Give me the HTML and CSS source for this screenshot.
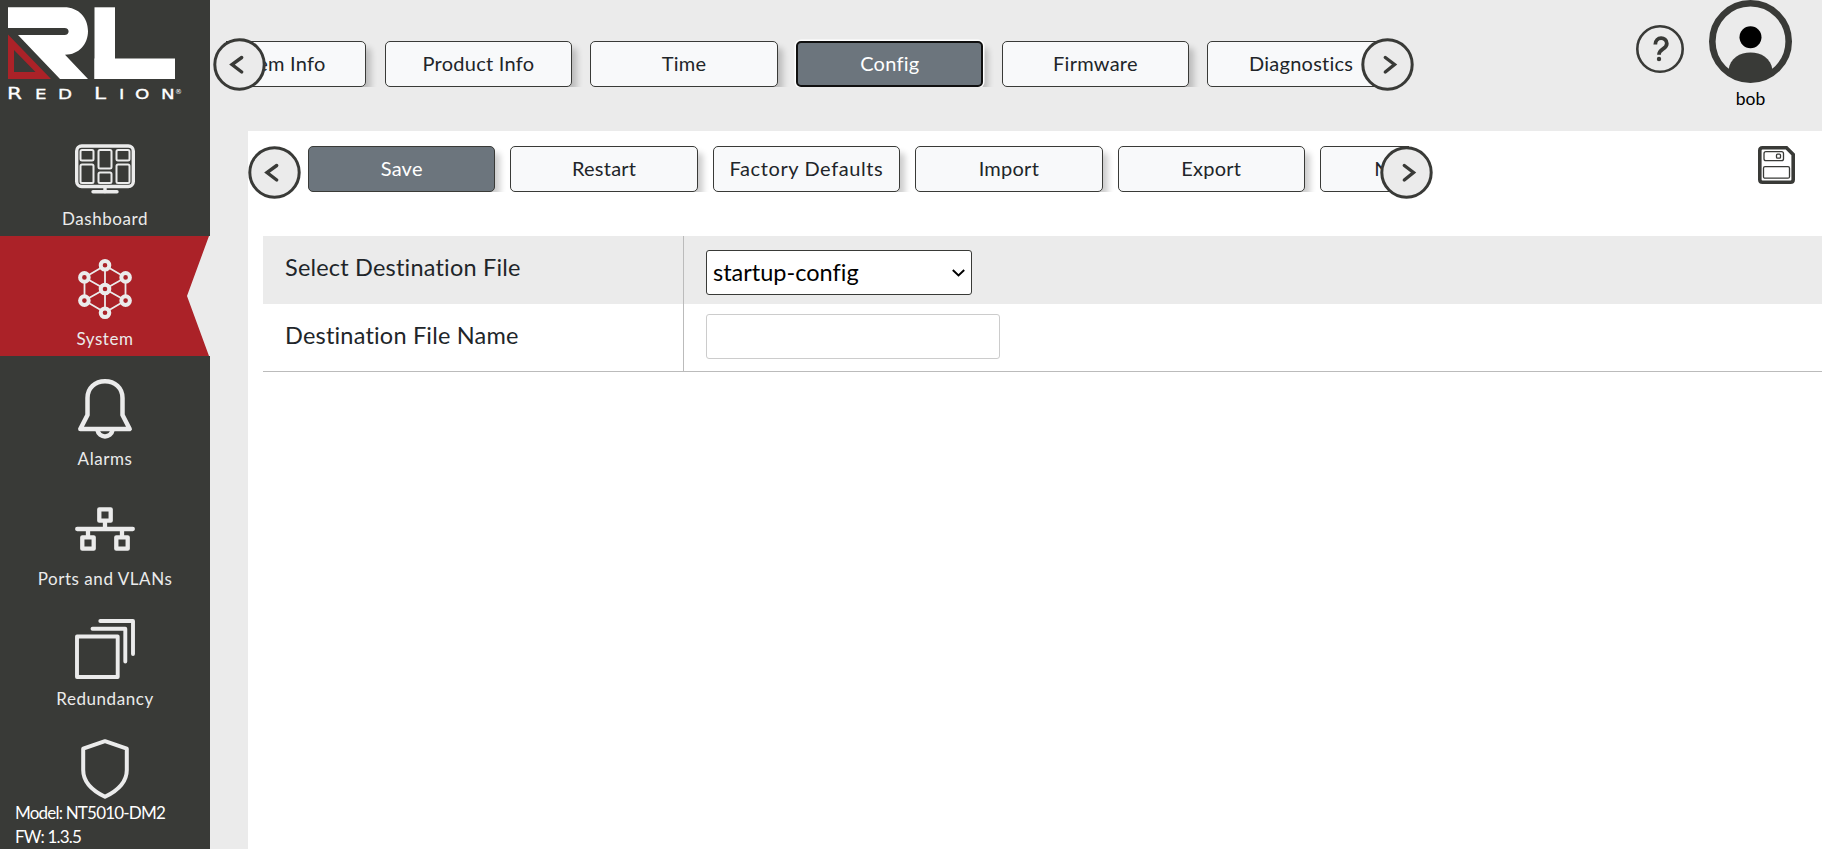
FILE: index.html
```html
<!DOCTYPE html>
<html lang="en">
<head>
  <meta charset="UTF-8">
  <title>Red Lion - System Config</title>
  <link rel="stylesheet" href="styles.css">
</head>
<body>
  <div class="sidebar">
    <div class="logo">
      <svg class="logo-mark" width="176" height="80" viewBox="0 0 176 80">
        <path fill="#fff" d="M8 7.300H64C79 7.300 88 18 88 31S79 54.700 65 54.700L88 79H60L18 35H64.500C70 35 70 28 64.500 28H8Z"/>
        <path fill="#ab2228" fill-rule="evenodd" d="M8 34.500L51 79H8ZM14 50V72H35.500Z"/>
        <rect x="94.500" y="7.300" width="20.500" height="71.700" fill="#fff"/>
        <rect x="94.500" y="58.500" width="80.500" height="20.500" fill="#fff"/>
      </svg>
      <div class="logo-name"><span class="cap r">R</span><span class="e">E</span><span class="d">D</span><span class="cap l">L</span><span class="i">I</span><span class="o">O</span><span class="n">N</span><sup>®</sup></div>
    </div>
    <div class="menu">
      <div class="item">
        <svg width="60" height="60" viewBox="0 0 60 60" fill="none" stroke="#ebebeb">
          <rect x="1.700" y="7" width="56.600" height="40.500" rx="5" stroke-width="3.400"/>
          <g stroke-width="2">
            <rect x="5.500" y="11" width="13" height="10.500" rx="1.500"/>
            <rect x="5.500" y="25.500" width="13" height="18.500" rx="1.500"/>
            <rect x="23.500" y="11" width="13" height="18.500" rx="1.500"/>
            <rect x="23.500" y="33.500" width="13" height="10.500" rx="1.500"/>
            <rect x="41.500" y="11" width="13" height="10.500" rx="1.500"/>
            <rect x="41.500" y="25.500" width="13" height="18.500" rx="1.500"/>
          </g>
          <path d="M30 48V53M18 52.700H42" stroke-width="3.400" stroke-linecap="round"/>
        </svg>
        <span>Dashboard</span>
      </div>
      <div class="item active">
        <svg width="60" height="60" viewBox="0 0 60 60" fill="none" stroke="#ebebeb">
          <path stroke-width="1.800" d="M30 6.500L50.500 18.500V41.500L30 53.500L9.500 41.500V18.500ZM30 6.500V53.500M9.500 18.500L50.500 41.500M50.500 18.500L9.500 41.500"/>
          <g fill="#ab2228" stroke-width="4">
            <circle cx="30" cy="6.300" r="4.300"/>
            <circle cx="50.600" cy="18.400" r="4.300"/>
            <circle cx="50.600" cy="41.600" r="4.300"/>
            <circle cx="30" cy="53.700" r="4.300"/>
            <circle cx="9.400" cy="41.600" r="4.300"/>
            <circle cx="9.400" cy="18.400" r="4.300"/>
            <circle cx="30" cy="30" r="4.300"/>
          </g>
        </svg>
        <span>System</span>
      </div>
      <div class="item">
        <svg width="60" height="60" viewBox="0 0 60 60" fill="none" stroke="#ebebeb" stroke-width="4.500" stroke-linejoin="round">
          <path d="M12.500 36V19C12.500 9 20 2.300 30 2.300S47.500 9 47.500 19V36L54.700 50H5.300Z"/>
          <path d="M22.500 51C24 59.500 36 59.500 37.500 51"/>
        </svg>
        <span>Alarms</span>
      </div>
      <div class="item">
        <svg width="60" height="60" viewBox="0 0 60 60" fill="none" stroke="#ebebeb" stroke-width="4.300" stroke-linejoin="round">
          <rect x="24.300" y="10.300" width="11.400" height="11.400"/>
          <rect x="7.300" y="38.300" width="11.400" height="11.400"/>
          <rect x="41.300" y="38.300" width="11.400" height="11.400"/>
          <path d="M2.200 30H57.800" stroke-linecap="round"/>
          <path d="M30 22V31M13 30V38M47 30V38"/>
        </svg>
        <span>Ports and VLANs</span>
      </div>
      <div class="item">
        <svg width="60" height="60" viewBox="0 0 60 60" fill="none" stroke="#ebebeb" stroke-width="3.900" stroke-linecap="round" stroke-linejoin="round">
          <rect x="2" y="17.500" width="40.700" height="40.500"/>
          <path d="M17.500 9.700H50.300V42.500"/>
          <path d="M25.300 2H58V35"/>
        </svg>
        <span>Redundancy</span>
      </div>
      <div class="item">
        <svg width="60" height="60" viewBox="0 0 60 60" fill="none" stroke="#ebebeb" stroke-width="4" stroke-linejoin="round">
          <path d="M30 2.200L51.800 9.700V31C51.800 43 43 51.500 30 57.800C17 51.500 8.200 43 8.200 31V9.700Z"/>
        </svg>
      </div>
    </div>
    <div class="version">
      <div>Model: NT5010-DM2</div>
      <div>FW: 1.3.5</div>
    </div>
  </div>

  <div class="main">
    <div class="header">
      <div class="tabs">
        <div class="strip">
          <button>System Info</button>
          <button>Product Info</button>
          <button>Time</button>
          <button class="selected focus">Config</button>
          <button>Firmware</button>
          <button>Diagnostics</button>
        </div>
        <svg class="arrow prev" width="53" height="53" viewBox="0 0 53 53">
          <circle cx="26.500" cy="26.500" r="24.700"/>
          <path d="M28.700 19.500L19 26.500L28.700 34"/>
        </svg>
        <svg class="arrow next" width="53" height="53" viewBox="0 0 53 53">
          <circle cx="26.500" cy="26.500" r="24.700"/>
          <path d="M24.300 19.500L33.500 26.500L24.300 34"/>
        </svg>
      </div>
      <svg class="help" width="48" height="48" viewBox="0 0 48 48" fill="none" stroke="#393a37">
        <circle cx="24" cy="24" r="22.700" stroke-width="2.600"/>
        <path d="M19.300 19.500C19.300 11 30.800 11.500 30.800 18.400C30.800 24.600 23 23 23 29.800" stroke-width="3.800"/>
        <circle cx="23" cy="34" r="2.200" fill="#393a37" stroke="none"/>
      </svg>
      <div class="user">
        <svg width="83" height="83" viewBox="0 0 83 83">
          <circle cx="41.500" cy="41.500" r="38.200" fill="none" stroke="#393a37" stroke-width="6.600"/>
          <circle cx="41.500" cy="37.200" r="11"/>
          <path fill="#393a37" d="M19.500 70C21 58 31 52.500 41.500 52.500S62 58 63.500 70L56 79H27Z"/>
        </svg>
        <span>bob</span>
      </div>
    </div>

    <div class="content">
      <div class="subheader">
        <div class="subtabs">
          <div class="strip">
            <button class="selected">Save</button>
            <button>Restart</button>
            <button class="long">Factory Defaults</button>
            <button>Import</button>
            <button>Export</button>
            <button>Network</button>
          </div>
          <svg class="arrow prev" width="53" height="53" viewBox="0 0 53 53">
            <circle cx="26.500" cy="26.500" r="24.700"/>
            <path d="M28.700 19.500L19 26.500L28.700 34"/>
          </svg>
          <svg class="arrow next" width="53" height="53" viewBox="0 0 53 53">
            <circle cx="26.500" cy="26.500" r="24.700"/>
            <path d="M24.300 19.500L33.500 26.500L24.300 34"/>
          </svg>
        </div>
        <svg class="disk" width="37" height="38" viewBox="0 0 37 38" fill="none" stroke="#393a37">
          <path d="M4.500 1.800H28.500L35.200 8.500V33.500Q35.200 36.200 32.500 36.200H4.500Q1.800 36.200 1.800 33.500V4.500Q1.800 1.800 4.500 1.800Z" stroke-width="3.600"/>
          <g stroke-width="1.300">
            <rect x="6" y="5.700" width="19.500" height="9" rx="2"/>
            <rect x="18.500" y="8.200" width="4" height="4" rx="1"/>
            <rect x="5.500" y="20.700" width="26" height="11.500" rx="1.500"/>
          </g>
        </svg>
      </div>

      <div class="form">
        <div class="row shaded">
          <label for="dest">Select Destination File</label>
          <div class="field">
            <div class="select">
              <select id="dest"><option>startup-config</option></select>
              <svg width="13" height="8" viewBox="0 0 13 8"><path d="M.8 1L6.500 6.500L12.200 1" fill="none" stroke="#000" stroke-width="1.900"/></svg>
            </div>
          </div>
        </div>
        <div class="row">
          <label for="name">Destination File Name</label>
          <div class="field"><input id="name" type="text"></div>
        </div>
      </div>
    </div>
  </div>
</body>
</html>
```

FILE: styles.css
```css
* { box-sizing: border-box; }
body {
  margin: 0;
  height: 849px;
  display: flex;
  overflow: hidden;
  background: #ebebeb;
  color: #212529;
  font-family: Lato, "Open Sans", sans-serif;
  font-variant-ligatures: none;
}
button, input, select {
  font-family: inherit;
  font-variant-ligatures: none;
}
svg { display: block; }

/* sidebar */
.sidebar {
  position: relative;
  flex: none;
  width: 210px;
  height: 849px;
  overflow: hidden;
  background: #393a37;
  color: #fff;
}
.logo { height: 116px; }
.logo-name {
  display: flex;
  align-items: baseline;
  padding-left: 7px;
  margin-top: 4px;
  height: 20px;
  line-height: 20px;
  font-family: "DejaVu Sans", sans-serif;
  font-size: 13.5px;
}
.logo-name span {
  transform: scaleX(1.35);
  transform-origin: left;
  -webkit-text-stroke: 0.3px #fff;
}
.logo-name .cap { font-size: 16px; }
.r { width: 28px; }
.e { width: 23px; }
.d { width: 36px; }
.l { width: 25px; }
.i { width: 16px; }
.o { width: 26px; }
.n { width: 14px; }
.logo-name sup {
  align-self: flex-start;
  padding-top: 4px;
  font-size: 7px;
  line-height: 8px;
}
.item {
  display: flex;
  flex-direction: column;
  align-items: center;
  height: 120px;
  padding-top: 23px;
  font-size: 17px;
  color: #ebebeb;
}
.item span {
  margin-top: 8px;
  line-height: 24px;
  letter-spacing: 0.55px;
}
.item.active {
  background: #ab2228;
  clip-path: polygon(0 0, 209px 0, 187px 50%, 209px 100%, 0 100%);
}
.menu {
  background: linear-gradient(#ebebeb, #ebebeb) right 120px / 23px 120px no-repeat;
}
.version {
  position: absolute;
  left: 0;
  bottom: 0;
  width: 210px;
  padding-left: 15px;
  font-size: 17px;
  line-height: 24px;
  letter-spacing: -0.8px;
}

/* header */
.main {
  flex: 1;
  display: flex;
  flex-direction: column;
  min-width: 0;
}
.header {
  display: flex;
  align-items: flex-start;
  height: 131px;
  padding-left: 3px;
}
.tabs {
  position: relative;
  width: 1201px;
  height: 53px;
  margin-top: 38px;
}
.strip {
  display: flex;
  overflow: hidden;
}
.tabs .strip {
  width: 1175px;
  height: 52px;
  margin: -3px 0 0 13px;
  padding-top: 6px;
  gap: 18.3px;
}
.tabs .strip button:first-child { margin-left: -47px; }
.strip button {
  flex: none;
  width: 187.4px;
  height: 46px;
  padding: 0 0 2px;
  border: 1px solid #393a37;
  border-radius: 5px;
  background: #f8f9fa;
  color: #212529;
  font-size: 20px;
  letter-spacing: 0.25px;
  box-shadow: 6px 6px 6px -1px rgba(0,0,0,0.2);
}
.strip .long { letter-spacing: 0.6px; }
.strip .selected {
  background: #6c757d;
  color: #fff;
}
.strip .focus {
  border: 2px solid #101010;
  box-shadow: 0 0 0 1.5px #fff, 6px 6px 6px -1px rgba(0,0,0,0.2);
}
.arrow {
  position: absolute;
  top: 0;
  fill: #ebebeb;
  stroke: #393a37;
  stroke-width: 3;
}
.arrow path {
  fill: none;
  stroke-width: 3.4;
  stroke-linecap: round;
}
.prev { left: 0; }
.next { right: 0; }
.help { margin: 25px 0 0 222px; }
.user {
  display: flex;
  flex-direction: column;
  align-items: center;
  margin-left: 25px;
  color: #000;
  font-size: 17.5px;
}
.user span { margin-top: 4px; line-height: 24px; }

/* page content */
.content {
  flex: 1;
  margin-left: 38px;
  background: #fff;
}
.subheader {
  display: flex;
  justify-content: space-between;
  height: 105px;
  padding: 15px 27px 0 0;
}
.subtabs {
  position: relative;
  width: 1185px;
  height: 53px;
}
.subtabs .strip {
  width: 1101px;
  height: 46px;
  margin-left: 60px;
  gap: 15px;
}
.form {
  margin-left: 15px;
  border-bottom: 1px solid #bbb;
}
.row {
  display: flex;
  height: 67px;
}
.row label {
  width: 421px;
  padding: 15px 0 0 22px;
  border-right: 1px solid #bbb;
  font-size: 23.5px;
  line-height: 32px;
  letter-spacing: 0.2px;
}
.field { padding: 10px 0 0 22px; }
.shaded {
  height: 68px;
  background: #ebebeb;
}
.shaded .field { padding-top: 14px; }
.select {
  position: relative;
  width: 266px;
}
.select svg {
  position: absolute;
  right: 7px;
  top: 19px;
  pointer-events: none;
}
select, input {
  display: block;
  height: 45px;
  border: 1px solid #393a37;
  border-radius: 3px;
  background: #fff;
  color: #000;
  font-size: 23.5px;
}
select {
  appearance: none;
  width: 266px;
  padding: 0 0 2px 6px;
}
input {
  width: 294px;
  border-color: #ccc;
}
```
